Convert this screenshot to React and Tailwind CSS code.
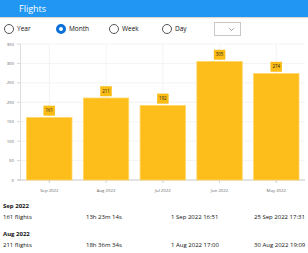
import React from 'react';

const data = [
  { label: 'Sep 2022', value: 161 },
  { label: 'Aug 2022', value: 211 },
  { label: 'Jul 2022', value: 192 },
  { label: 'Jun 2022', value: 305 },
  { label: 'May 2022', value: 274 },
];

const summary = [
  { month: 'Sep 2022', flights: '161 flights', time: '13h 23m 14s', first: '1 Sep 2022 16:51', last: '25 Sep 2022 17:31' },
  { month: 'Aug 2022', flights: '211 flights', time: '18h 36m 34s', first: '1 Aug 2022 17:00', last: '30 Aug 2022 19:09' },
];

const BASE = 180;
const TOP = 44;
const scale = (BASE - TOP) / 350;
const yOf = (v) => BASE - v * scale;
const colW = 56.75;
const cx = (i) => 49.3 + i * colW;

function Radio({ label, checked }) {
  return (
    <div className="flex items-center gap-[3px]">
      {checked ? (
        <span className="w-[10px] h-[10px] rounded-full border-[3px] border-[#0a6fd6] bg-white" />
      ) : (
        <span className="w-[10px] h-[10px] rounded-full border border-[#555] bg-white" />
      )}
      <span className="text-[6.5px] text-[#111]">{label}</span>
    </div>
  );
}

function Chart() {
  const ticks = [0, 50, 100, 150, 200, 250, 300, 350];
  return (
    <svg width="308" height="156" viewBox="0 40 308 156" className="block">
      {ticks.map((t) => (
        <g key={t}>
          <line x1="20.5" x2="305" y1={yOf(t)} y2={yOf(t)} stroke="#f0f0f0" strokeWidth="0.8" />
          <line x1="17" x2="20.5" y1={yOf(t)} y2={yOf(t)} stroke="#ccc" strokeWidth="0.8" />
          <text x="14" y={yOf(t) + 1.5} fontSize="4.3" fill="#666" textAnchor="end">{t}</text>
        </g>
      ))}
      {data.map((d, i) => (
        <line key={d.label} x1={cx(i)} x2={cx(i)} y1={TOP} y2={BASE + 3} stroke="#f0f0f0" strokeWidth="0.8" />
      ))}
      <line x1="20.5" x2="20.5" y1={TOP} y2={BASE} stroke="#ddd" strokeWidth="1" />
      <line x1="17" x2="305" y1={BASE} y2={BASE} stroke="#ccc" strokeWidth="1" />
      {data.map((d, i) => {
        const top = yOf(d.value);
        return (
          <g key={d.label}>
            <rect x={cx(i) - 22.7} y={top} width="45.4" height={BASE - top} fill="#fdbd1a" stroke="#ffd866" strokeWidth="0.8" />
            <rect x={cx(i) - 5.5} y={top - 11.5} width="11" height="9.5" fill="#fbbc15" stroke="#f4b400" strokeWidth="0.4" />
            <text x={cx(i)} y={top - 5.3} fontSize="4.4" fill="#222" textAnchor="middle">{d.value}</text>
            <line x1={cx(i)} x2={cx(i)} y1={BASE} y2={BASE + 3} stroke="#ccc" strokeWidth="0.8" />
            <text x={cx(i)} y={BASE + 11.5} fontSize="4.3" fill="#666" textAnchor="middle">{d.label}</text>
          </g>
        );
      })}
    </svg>
  );
}

export default function App() {
  return (
    <div className="w-[308px] h-[253px] bg-white overflow-hidden" style={{ fontFamily: '"Open Sans", sans-serif' }}>
      <div className="h-[17px] bg-[#2196f3] shadow-[0_1px_1px_rgba(0,0,0,0.15)] flex items-center pl-[19px]">
        <span className="text-[9px] text-white">Flights</span>
      </div>
      <div className="h-[23px] flex items-center pl-[4px] pt-[1px]">
        <div className="w-[52px]"><Radio label="Year" /></div>
        <div className="w-[53px]"><Radio label="Month" checked /></div>
        <div className="w-[53px]"><Radio label="Week" /></div>
        <div className="w-[52px]"><Radio label="Day" /></div>
        <div className="w-[27px] h-[14px] border border-[#c8c8c8] flex items-center justify-end pr-[6px]">
          <svg width="5" height="3" viewBox="0 0 5 3">
            <path d="M0.3 0.3 L2.5 2.5 L4.7 0.3" fill="none" stroke="#777" strokeWidth="0.7" />
          </svg>
        </div>
      </div>
      <Chart />
      <div className="pl-[3px] pt-[4.5px] text-[6px] text-[#111]">
        {summary.map((s) => (
          <div key={s.month} className="mb-[6px]">
            <div className="font-bold h-[11px] leading-[11px]">{s.month}</div>
            <div className="grid grid-cols-[83px_85px_83px_1fr] h-[11px] leading-[11px]">
              <span>{s.flights}</span>
              <span>{s.time}</span>
              <span>{s.first}</span>
              <span>{s.last}</span>
            </div>
          </div>
        ))}
      </div>
    </div>
  );
}
